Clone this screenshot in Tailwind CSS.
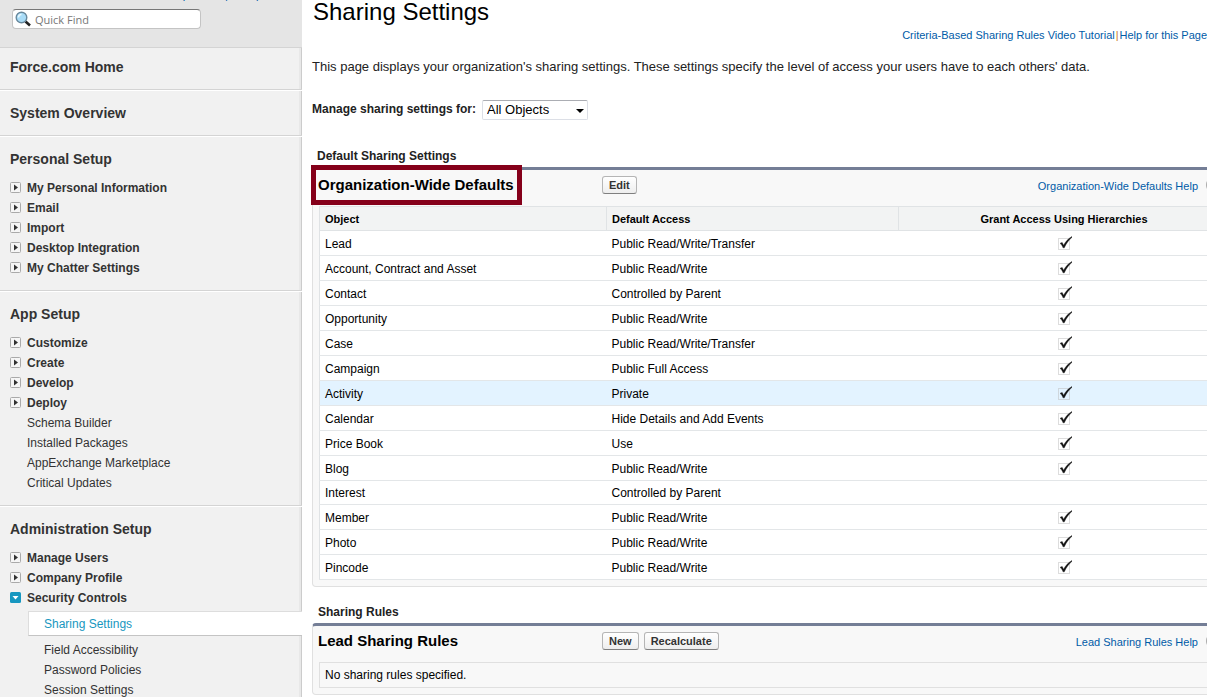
<!DOCTYPE html>
<html lang="en">
<head>
<meta charset="utf-8">
<title>Sharing Settings</title>
<script src="https://cdn.jsdelivr.net/npm/@tailwindcss/browser@4"></script>
</head>
<body class="flex h-screen overflow-hidden bg-white font-['Liberation_Sans',Arial,sans-serif] text-xs text-[#222]">
<svg class="hidden" aria-hidden="true">
  <symbol id="check" viewBox="0 0 16 16">
    <path d="M2.5 3.5h11v11h-11z" fill="none" stroke="#bbb" stroke-dasharray="1 1"/>
    <path d="M4 8.3 6.2 7.5 7.6 10.3C9.4 6.800 12.200 3.600 16 1.500V2.300C12.800 5 10.200 8.500 8.300 12.800H7C6.300 10.800 5.500 9.300 4 8.300Z" fill="#111" stroke="#111" stroke-width=".4"/>
  </symbol>
  <symbol id="closed" viewBox="0 0 11 11">
    <rect x=".5" y=".5" width="10" height="10" rx="1" fill="#f6f6f6" stroke="#aaa"/>
    <path d="M4 2.500 8 5.500 4 8.500Z" fill="#333"/>
  </symbol>
  <symbol id="open" viewBox="0 0 11 11">
    <rect width="11" height="11" rx="1.500" fill="#1797c0"/>
    <path d="M2.500 4h6L5.500 7.500Z" fill="#fff"/>
  </symbol>
</svg>

<aside class="flex w-[302px] shrink-0 flex-col bg-white text-[#333]">
  <div class="h-12 shrink-0 border-b border-[#d4d4d4] bg-[#e5e5e5]">
    <div class="-mt-3 flex h-[14px] gap-[3px] pl-[170px] text-[11px] leading-[14px] text-[#015ba7]"><a href="#">Expand All</a><span>|</span><a href="#">Collapse All</a></div>
    <label class="mt-[7px] ml-3 flex h-5 w-[189px] items-center rounded border border-[#c4c4c4] border-t-[#777] bg-white pl-[2px]">
      <svg class="size-4 shrink-0" viewBox="0 0 16 16"><path d="m10.500 10.500 4.500 4" stroke="#222" stroke-width="2.600"/><circle cx="6.500" cy="6.500" r="5.300" fill="#a9dcf7" stroke="#68889c" stroke-width="1.400"/><path d="M3.500 6.500a3 3 0 0 1 3-3" stroke="#e8f8ff" stroke-width="1.500" fill="none"/></svg>
      <input type="text" aria-label="Quick Find" placeholder="Quick Find" class="ml-1 min-w-0 flex-1 pt-[2px] font-['Open_Sans','Noto_Sans',sans-serif] text-[11px] outline-none placeholder:text-[#777]">
    </label>
  </div>

  <nav class="flex flex-1 flex-col [&_h2]:text-[14px] [&_h2]:leading-5 [&_h2]:font-bold [&_li]:leading-5 [&_section]:border-b [&_section]:border-[#d4d4d4] [&_section]:bg-[#f1f1f1] [&_section]:pb-3 [&_section]:pl-[10px] [&_section]:shadow-[inset_-1px_0_0_#ccc,inset_-3px_0_0_#e8e8e8]">
    <section class="pt-[9px]"><h2><a href="#">Force.com Home</a></h2></section>
    <section class="mt-px pt-3"><h2><a href="#">System Overview</a></h2></section>
    <section class="mt-px pt-3">
      <h2>Personal Setup</h2>
      <ul class="mt-[9px] font-bold [&_a]:flex [&_a]:items-center [&_a]:gap-[6px] [&_svg]:mb-px [&_svg]:size-[11px]">
        <li><a href="#"><svg><use href="#closed"/></svg>My Personal Information</a></li>
        <li><a href="#"><svg><use href="#closed"/></svg>Email</a></li>
        <li><a href="#"><svg><use href="#closed"/></svg>Import</a></li>
        <li><a href="#"><svg><use href="#closed"/></svg>Desktop Integration</a></li>
        <li><a href="#"><svg><use href="#closed"/></svg>My Chatter Settings</a></li>
      </ul>
    </section>
    <section class="mt-px pt-3">
      <h2>App Setup</h2>
      <ul class="mt-[9px] font-bold [&_a]:flex [&_a]:items-center [&_a]:gap-[6px] [&_svg]:mb-px [&_svg]:size-[11px]">
        <li><a href="#"><svg><use href="#closed"/></svg>Customize</a></li>
        <li><a href="#"><svg><use href="#closed"/></svg>Create</a></li>
        <li><a href="#"><svg><use href="#closed"/></svg>Develop</a></li>
        <li><a href="#"><svg><use href="#closed"/></svg>Deploy</a></li>
      </ul>
      <ul class="pl-[17px]">
        <li><a href="#">Schema Builder</a></li>
        <li><a href="#">Installed Packages</a></li>
        <li><a href="#">AppExchange Marketplace</a></li>
        <li><a href="#">Critical Updates</a></li>
      </ul>
    </section>
    <section class="mt-px flex-1 pt-3">
      <h2>Administration Setup</h2>
      <ul class="mt-[9px] font-bold [&_a]:flex [&_a]:items-center [&_a]:gap-[6px] [&_svg]:mb-px [&_svg]:size-[11px]">
        <li><a href="#"><svg><use href="#closed"/></svg>Manage Users</a></li>
        <li><a href="#"><svg><use href="#closed"/></svg>Company Profile</a></li>
        <li><a href="#"><svg><use href="#open"/></svg>Security Controls</a></li>
      </ul>
      <ul class="pl-[18px]">
        <li class="mt-[3px] mb-1 border border-r-0 border-[#ddd] border-b-[#c4c4c4] bg-white pt-px pl-[15px] text-[#1797c0]"><a href="#" class="block leading-[22px]">Sharing Settings</a></li>
        <li class="pl-4"><a href="#">Field Accessibility</a></li>
        <li class="pl-4"><a href="#">Password Policies</a></li>
        <li class="pl-4"><a href="#">Session Settings</a></li>
      </ul>
    </section>
  </nav>
</aside>

<main class="min-w-0 flex-1 overflow-hidden pl-[10px]">
  <h1 class="pl-px text-2xl leading-6 text-black">Sharing Settings</h1>
  <div class="mt-1 flex justify-end gap-px text-[11px] leading-[14px] text-[#015ba7]"><a href="#">Criteria-Based Sharing Rules Video Tutorial</a><span class="text-[#c77c28]">|</span><a href="#">Help for this Page</a></div>
  <p class="mt-4 text-[13px] leading-[18px]">This page displays your organization's sharing settings. These settings specify the level of access your users have to each others' data.</p>

  <div class="mt-6 flex h-5 items-center gap-[6px]">
    <label for="objects" class="pb-[2px] font-bold">Manage sharing settings for:</label>
    <div class="relative">
      <select id="objects" class="block h-5 w-[106px] appearance-none rounded-xs border border-[#dcdfe6] border-t-[#abadb3] bg-white pl-1 text-[13px] leading-[18px] text-black"><option>All Objects</option></select>
      <svg class="pointer-events-none absolute top-[9px] right-1 h-1 w-2" viewBox="0 0 8 4"><path d="M0 0h8L4 4Z" fill="#000"/></svg>
    </div>
  </div>

  <h2 class="mt-7 pl-[5px] leading-4 font-bold">Default Sharing Settings</h2>
  <section class="mt-[3px] w-[calc(100%+30px)] rounded border border-t-3 border-[#e0e0e0] border-t-[#747e96] bg-[#f8f8f8] px-[6px] pb-[6px]">
    <div class="flex h-9 items-center pr-2 pb-[6px]">
      <div class="w-[283px]"><h3 class="relative -my-2 -ml-2 w-[211px] border-5 border-[#85001a] pl-[2px] text-[15px] leading-[30px] font-bold whitespace-nowrap text-black">Organization-Wide Defaults</h3></div>
      <button class="h-[18px] rounded-[3px] border border-[#b5b5b5] border-b-[#7f7f7f] bg-linear-to-b from-white to-[#eee] px-[6px] text-[11px] leading-4 font-bold text-[#333]">Edit</button>
      <a href="#" class="ml-auto pt-[2px] text-[11px] text-[#015ba7]">Organization-Wide Defaults Help</a>
      <span class="ml-2 size-4 rounded-full border-2 border-[#aaa]"></span>
    </div>
    <table class="w-full table-fixed border-collapse border border-[#e0e3e5] bg-white text-left text-black [&_svg]:size-4 [&_svg]:mx-auto [&_td]:h-[25px] [&_td]:border-b [&_td]:border-[#e3e6e8] [&_td]:p-0 [&_td]:pt-px [&_td]:pl-[5px] [&_td:last-child]:pt-0 [&_td:last-child]:pl-0 [&_th]:h-6 [&_th]:border [&_th]:border-[#e0e3e5] [&_th]:p-0 [&_th]:pt-px [&_th]:pl-[5px] [&_th:last-child]:pl-0">
      <colgroup><col class="w-[287px]"><col class="w-[292px]"><col></colgroup>
      <thead class="bg-[#f2f3f3] text-[11px]"><tr><th>Object</th><th>Default Access</th><th class="text-center">Grant Access Using Hierarchies</th></tr></thead>
      <tbody>
        <tr><td>Lead</td><td>Public Read/Write/Transfer</td><td><svg role="img" aria-label="Checked"><use href="#check"/></svg></td></tr>
        <tr><td>Account, Contract and Asset</td><td>Public Read/Write</td><td><svg role="img" aria-label="Checked"><use href="#check"/></svg></td></tr>
        <tr><td>Contact</td><td>Controlled by Parent</td><td><svg role="img" aria-label="Checked"><use href="#check"/></svg></td></tr>
        <tr><td>Opportunity</td><td>Public Read/Write</td><td><svg role="img" aria-label="Checked"><use href="#check"/></svg></td></tr>
        <tr><td>Case</td><td>Public Read/Write/Transfer</td><td><svg role="img" aria-label="Checked"><use href="#check"/></svg></td></tr>
        <tr><td>Campaign</td><td>Public Full Access</td><td><svg role="img" aria-label="Checked"><use href="#check"/></svg></td></tr>
        <tr class="bg-[#e3f3ff]"><td>Activity</td><td>Private</td><td><svg role="img" aria-label="Checked"><use href="#check"/></svg></td></tr>
        <tr><td>Calendar</td><td>Hide Details and Add Events</td><td><svg role="img" aria-label="Checked"><use href="#check"/></svg></td></tr>
        <tr><td>Price Book</td><td>Use</td><td><svg role="img" aria-label="Checked"><use href="#check"/></svg></td></tr>
        <tr><td>Blog</td><td>Public Read/Write</td><td><svg role="img" aria-label="Checked"><use href="#check"/></svg></td></tr>
        <tr class="[&>td]:h-6"><td>Interest</td><td>Controlled by Parent</td><td></td></tr>
        <tr><td>Member</td><td>Public Read/Write</td><td><svg role="img" aria-label="Checked"><use href="#check"/></svg></td></tr>
        <tr><td>Photo</td><td>Public Read/Write</td><td><svg role="img" aria-label="Checked"><use href="#check"/></svg></td></tr>
        <tr><td>Pincode</td><td>Public Read/Write</td><td><svg role="img" aria-label="Checked"><use href="#check"/></svg></td></tr>
      </tbody>
    </table>
  </section>

  <h2 class="mt-[17px] pl-[6px] leading-4 font-bold">Sharing Rules</h2>
  <section class="mt-[3px] w-[calc(100%+30px)] rounded border border-t-3 border-[#e0e0e0] border-t-[#747e96] bg-[#f8f8f8] px-[6px] pb-[6px]">
    <div class="flex h-9 items-center pr-2 pb-[6px]">
      <h3 class="-ml-px w-[284px] text-[15px] font-bold text-black">Lead Sharing Rules</h3>
      <div class="flex gap-[5px] [&_button]:h-[18px] [&_button]:rounded-[3px] [&_button]:border [&_button]:border-[#b5b5b5] [&_button]:border-b-[#7f7f7f] [&_button]:bg-linear-to-b [&_button]:from-white [&_button]:to-[#eee] [&_button]:px-[6px] [&_button]:text-[11px] [&_button]:leading-4 [&_button]:font-bold [&_button]:text-[#333]">
        <button>New</button><button>Recalculate</button>
      </div>
      <a href="#" class="ml-auto pt-[2px] text-[11px] text-[#015ba7]">Lead Sharing Rules Help</a>
      <span class="ml-2 size-4 rounded-full border-2 border-[#aaa]"></span>
    </div>
    <p class="border border-[#e0e0e0] pl-[5px] leading-6 text-black">No sharing rules specified.</p>
  </section>
</main>
</body>
</html>
